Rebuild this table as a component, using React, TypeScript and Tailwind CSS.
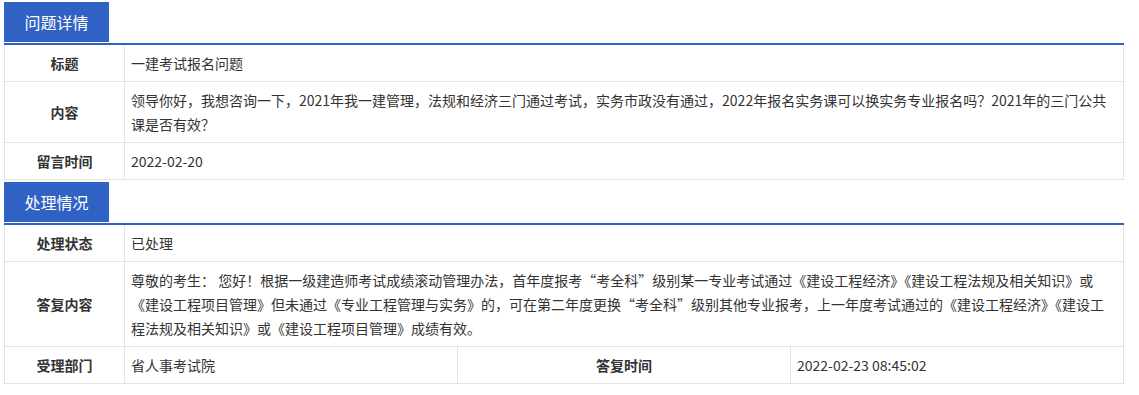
import React from 'react';

const blue = 'bg-[#3062c4]';

function SectionTitle({ title }: { title: string }) {
  return (
    <div className="border-b-2 border-[#3062c4] pb-px">
      <div className={`flex h-10 w-[105px] items-center justify-center text-base text-white ${blue}`}>
        {title}
      </div>
    </div>
  );
}

function Row({ label, children }: { label: string; children: React.ReactNode }) {
  return (
    <div className="grid grid-cols-[120px_1fr] border-b border-[#e4e4e4]">
      <div className="flex items-center justify-center border-r border-[#e4e4e4] font-bold">{label}</div>
      <div className="px-1.5 py-1.5">{children}</div>
    </div>
  );
}

const question =
  '领导你好，我想咨询一下，2021年我一建管理，法规和经济三门通过考试，实务市政没有通过，2022年报名实务课可以换实务专业报名吗？2021年的三门公共课是否有效？';

const answer =
  '尊敬的考生： 您好！根据一级建造师考试成绩滚动管理办法，首年度报考“考全科”级别某一专业考试通过《建设工程经济》《建设工程法规及相关知识》或《建设工程项目管理》但未通过《专业工程管理与实务》的，可在第二年度更换“考全科”级别其他专业报考，上一年度考试通过的《建设工程经济》《建设工程法规及相关知识》或《建设工程项目管理》成绩有效。';

export default function App() {
  return (
    <div
      className="min-h-screen bg-white pl-1 pt-0.5 text-sm leading-6 text-[#333]"
      style={{ fontFamily: '"Microsoft YaHei", "Noto Sans CJK SC", sans-serif' }}
    >
      <div className="w-[1120px]">
        <SectionTitle title="问题详情" />
        <div className="border-x border-[#e4e4e4]">
          <Row label="标题">一建考试报名问题</Row>
          <Row label="内容">{question}</Row>
          <Row label="留言时间">2022-02-20</Row>
        </div>

        <div className="mt-0.5">
          <SectionTitle title="处理情况" />
        </div>
        <div className="border-x border-[#e4e4e4]">
          <Row label="处理状态">已处理</Row>
          <Row label="答复内容">{answer}</Row>
          <div className="grid grid-cols-[120px_333px_333px_1fr] border-b border-[#e4e4e4]">
            <div className="flex items-center justify-center border-r border-[#e4e4e4] font-bold">受理部门</div>
            <div className="border-r border-[#e4e4e4] px-1.5 py-1.5">省人事考试院</div>
            <div className="flex items-center justify-center border-r border-[#e4e4e4] font-bold">答复时间</div>
            <div className="px-1.5 py-1.5">2022-02-23 08:45:02</div>
          </div>
        </div>
      </div>
    </div>
  );
}
